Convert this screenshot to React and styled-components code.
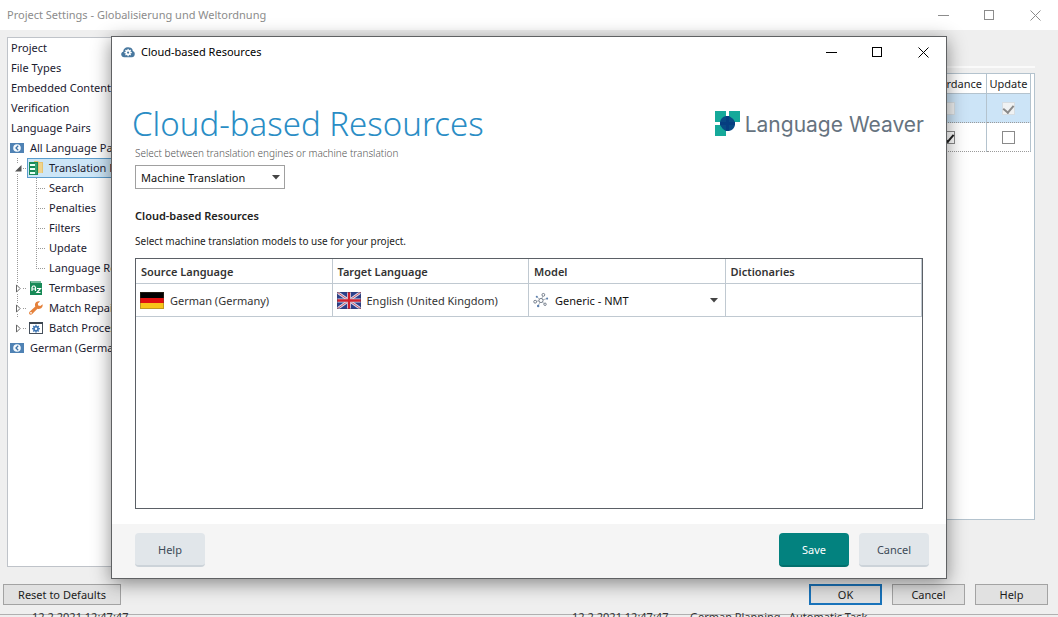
import React from 'react';
import styled, { createGlobalStyle, css } from 'styled-components';

const treeItems = [
  { label: 'Project', level: 0 },
  { label: 'File Types', level: 0 },
  { label: 'Embedded Content', level: 0 },
  { label: 'Verification', level: 0 },
  { label: 'Language Pairs', level: 0 },
  { label: 'All Language Pairs', level: 1, icon: 'pair' },
  { label: 'Translation Memory', level: 2, icon: 'memory', open: true, selected: true },
  { label: 'Search', level: 3 },
  { label: 'Penalties', level: 3 },
  { label: 'Filters', level: 3 },
  { label: 'Update', level: 3 },
  { label: 'Language Resources', level: 3, last: true },
  { label: 'Termbases', level: 2, icon: 'termbase' },
  { label: 'Match Repair', level: 2, icon: 'wrench' },
  { label: 'Batch Processing', level: 2, icon: 'batch', last: true },
  { label: 'German (Germany)', level: 1, icon: 'pair' },
];

const gearTeeth = [0, 45, 90, 135, 180, 225, 270, 315];

const Gear = ({ cx, cy, r, fill, hole }) => (
  <g fill={fill}>
    <circle cx={cx} cy={cy} r={r} />
    {gearTeeth.map((deg) => (
      <rect
        key={deg}
        x={cx - r * 0.25}
        y={cy - r * 1.4}
        width={r * 0.5}
        height={r}
        transform={`rotate(${deg} ${cx} ${cy})`}
      />
    ))}
    <circle cx={cx} cy={cy} r={r * 0.42} fill={hole} />
  </g>
);

const PairIcon = () => (
  <svg width="14" height="10" viewBox="0 0 14 10">
    <rect width="14" height="10" fill="#4f82b4" />
    <circle cx="7" cy="5" r="3.8" fill="#f4f9fd" />
    <path d="M8.2 2.8 6 5l2.200 2.200" fill="none" stroke="#3f74a8" strokeWidth="1.300" />
  </svg>
);

const MemoryIcon = () => (
  <svg width="16" height="16" viewBox="0 0 16 16">
    <path d="M6 1h4l1 1h4v11H6z" fill="#e6c472" />
    <path d="M11 3h3v10h-3z" fill="#efd38c" />
    <rect x="1" y="2" width="9" height="13" fill="#178a57" />
    <g fill="#e9fff4">
      <rect x="2" y="4" width="5" height="2" />
      <rect x="2" y="8" width="5" height="2" />
      <rect x="2" y="12" width="5" height="2" />
    </g>
    <path d="M8 3v11" stroke="#56b489" />
  </svg>
);

const TermbaseIcon = () => (
  <svg width="16" height="16" viewBox="0 0 16 16">
    <path d="M2 2q0-1 1-1h10v2H2z" fill="#178a57" />
    <path d="M3 2h10" stroke="#d9f0e5" />
    <rect x="2" y="3" width="12" height="12" fill="#178a57" />
    <path
      d="M4 11V7.5L5 6h1.500l1 1.500V11M4 9h3.500M9 8.500h3.500L9 12.500h3.500"
      fill="none"
      stroke="#fff"
      strokeWidth="1.200"
    />
  </svg>
);

const WrenchIcon = () => (
  <svg width="16" height="16" viewBox="0 0 16 16">
    <path
      d="M14.600 4.300 12.300 6 10.200 5.600 9.800 3.500 12 1.400C9.800.7 7.300 2 7 4.300c-.1.900 0 1.600.3 2.200L1.600 11.800c-1.600 1.700.6 4 2.400 2.500l5.400-5.600c2.900 1.100 5.800-1.200 5.200-4.400z"
      fill="#e5813b"
    />
    <circle cx="3" cy="12.800" r="0.900" fill="#fff" />
  </svg>
);

const BatchIcon = () => (
  <svg width="16" height="14" viewBox="0 0 16 14">
    <rect x="1.500" y="1.500" width="13" height="11" fill="#fff" stroke="#46505c" />
    <rect x="1" y="1" width="14" height="2" fill="#3c4651" />
    <Gear cx={8} cy={7.700} r={2.800} fill="#3f77b4" hole="#fff" />
  </svg>
);

const itemIcons = {
  pair: PairIcon,
  memory: MemoryIcon,
  termbase: TermbaseIcon,
  wrench: WrenchIcon,
  batch: BatchIcon,
};

const CloudIcon = () => (
  <svg width="14" height="12" viewBox="0 0 15 12">
    <path
      d="M3.500 11.500C-.6 11.500-.8 6 2.400 5.600 2.300 2 6 0 8.800 1.200 10.700.900 12.600 2.500 12.600 5c3.200.7 2.800 6.500-1 6.500z"
      fill="#48789f"
    />
    <Gear cx={7.600} cy={6.600} r={2.800} fill="#fff" hole="#48789f" />
  </svg>
);

const ModelIcon = () => (
  <svg width="16" height="17" viewBox="0 0 17 17">
    <path
      d="m8.500 8.500 2.500-6M8.500 8.500l-6 1M8.500 8.500l-3 5.500M8.500 8.500l6-2M8.500 8.500l4 4M8.500 8.500 4 4.500"
      stroke="#a9b1bb"
    />
    <g fill="#fff" stroke="#6f7986">
      <circle cx="8.500" cy="8.500" r="2.200" />
      <circle cx="11" cy="2.500" r="1.500" />
      <circle cx="2.300" cy="9.800" r="1.500" />
      <circle cx="12.800" cy="12.500" r="1.300" />
    </g>
    <g fill="#5b7fae">
      <circle cx="4" cy="4.500" r="1.100" />
      <circle cx="5.500" cy="14.300" r="1.300" />
      <circle cx="15" cy="6.500" r="1.100" />
    </g>
  </svg>
);

const GermanFlag = () => (
  <svg width="24" height="17" viewBox="0 0 24 17">
    <rect width="24" height="6" fill="#000" />
    <rect y="6" width="24" height="5" fill="#e01010" />
    <rect y="11" width="24" height="6" fill="#f8c418" />
    <rect x="0.500" y="0.500" width="23" height="16" fill="none" stroke="#5a4a2a" strokeOpacity="0.350" />
  </svg>
);

const BritishFlag = () => (
  <svg width="24" height="17" viewBox="0 0 24 17">
    <rect width="24" height="17" fill="#2b3f8c" />
    <path d="M0 0l24 17M24 0 0 17" stroke="#d5daec" strokeWidth="2.800" />
    <path d="M0 0l24 17M24 0 0 17" stroke="#cf5360" strokeWidth="1" />
    <path d="M12 0v17M0 8.500h24" stroke="#d3d7ea" strokeWidth="4" />
    <path d="M12 0v17M0 8.500h24" stroke="#d0202e" strokeWidth="2.400" />
    <rect x="0.500" y="0.500" width="23" height="16" fill="none" stroke="#333a66" strokeOpacity="0.400" />
  </svg>
);

const WeaverMark = () => (
  <svg width="26" height="26" viewBox="0 0 26 26">
    <path d="M0 0h11v11H0zM14 0h11v11H14zM0 14h11v11H0z" fill="#15a99a" />
    <path d="M11 5v6H5q1-5 6-6zM14 14h6q-1 5-6 6z" fill="#084a84" />
    <path d="M14 5q4 2 6 6h-6zM5 14h6v6q-4-2-6-6z" fill="#084a84" />
    <path d="M11 5h3v6h6v3h-6v6h-3v-6H5v-3h6z" fill="#063e80" />
  </svg>
);

const CaretDown = () => (
  <svg width="8" height="5" viewBox="0 0 8 5">
    <path d="M0 0h8L4 4.500z" fill="currentColor" />
  </svg>
);

const Expander = ({ open }) => (
  <svg width="8" height="9" viewBox="0 0 8 9">
    {open ? (
      <path d="M6.500 1v6.500H0z" fill="#555" />
    ) : (
      <path d="M1.500 .9v7.200l3.600-3.600z" fill="#fff" stroke="#666" />
    )}
  </svg>
);

const WindowControls = () => (
  <StControls>
    <StControlButton aria-label="Minimize">
      <svg width="11" height="11" viewBox="0 0 11 11">
        <path d="M0 5.500h11" stroke="currentColor" />
      </svg>
    </StControlButton>
    <StControlButton aria-label="Maximize">
      <svg width="11" height="11" viewBox="0 0 11 11">
        <rect x="0.500" y="0.500" width="9" height="9" fill="none" stroke="currentColor" />
      </svg>
    </StControlButton>
    <StControlButton aria-label="Close">
      <svg width="11" height="11" viewBox="0 0 11 11">
        <path d="m.5.5 10 10M10.500.5l-10 10" stroke="currentColor" />
      </svg>
    </StControlButton>
  </StControls>
);

const TreeItem = ({ item }) => {
  const Icon = itemIcons[item.icon];
  return (
    <StTreeRow>
      {item.level >= 2 && (
        <StGutter $line={item.level === 3 || !item.last} $branch={item.level === 2}>
          {item.level === 2 && <Expander open={item.open} />}
        </StGutter>
      )}
      {item.level === 3 && <StGutter $line={!item.last} $half={item.last} $branch />}
      <StTreeLabel $level={item.level} $selected={item.selected}>
        {Icon && <Icon />}
        <span>{item.label}</span>
      </StTreeLabel>
    </StTreeRow>
  );
};

const SettingsWindow = () => (
  <StWindow>
    <StTitleBar $inactive>
      <StWindowTitle>Project Settings - Globalisierung und Weltordnung</StWindowTitle>
      <WindowControls />
    </StTitleBar>
    <StBody>
      <StTree>
        {treeItems.map((item) => (
          <TreeItem key={item.label} item={item} />
        ))}
      </StTree>
      <StPanel>
        <StMemoryTable>
          <thead>
            <tr>
              <th aria-hidden="true" />
              <th>Concordance</th>
              <th>Update</th>
            </tr>
          </thead>
          <tbody>
            <StMemoryRow $selected>
              <td />
              <td>
                <StCheckbox type="checkbox" aria-label="Concordance" disabled />
              </td>
              <td>
                <StCheckbox type="checkbox" aria-label="Update" defaultChecked disabled />
              </td>
            </StMemoryRow>
            <StMemoryRow>
              <td />
              <td>
                <StCheckbox type="checkbox" aria-label="Concordance" defaultChecked />
              </td>
              <td>
                <StCheckbox type="checkbox" aria-label="Update" />
              </td>
            </StMemoryRow>
          </tbody>
        </StMemoryTable>
      </StPanel>
    </StBody>
    <StWindowFooter>
      <StClassicButton $wide>Reset to Defaults</StClassicButton>
      <StButtonGroup>
        <StClassicButton $primary>OK</StClassicButton>
        <StClassicButton>Cancel</StClassicButton>
        <StClassicButton>Help</StClassicButton>
      </StButtonGroup>
    </StWindowFooter>
    <StTaskStrip>
      <span>12.2.2021 12:47:47</span>
      <span>12.2.2021 12:47:47</span>
      <span>German Planning</span>
      <span>Automatic Task</span>
    </StTaskStrip>
  </StWindow>
);

const ResourcesDialog = () => (
  <StDialog role="dialog" aria-labelledby="dialog-title">
    <StTitleBar>
      <CloudIcon />
      <StWindowTitle id="dialog-title">Cloud-based Resources</StWindowTitle>
      <WindowControls />
    </StTitleBar>
    <StDialogHeader>
      <StHeading>Cloud-based Resources</StHeading>
      <StBrand>
        <WeaverMark />
        Language Weaver
      </StBrand>
    </StDialogHeader>
    <StDialogContent>
      <StHint htmlFor="engine">Select between translation engines or machine translation</StHint>
      <StSelectBox $bordered>
        <select id="engine">
          <option>Machine Translation</option>
        </select>
        <CaretDown />
      </StSelectBox>
      <StSubheading>Cloud-based Resources</StSubheading>
      <StText>Select machine translation models to use for your project.</StText>
      <StTableFrame>
        <StModelTable>
          <thead>
            <tr>
              <th>Source Language</th>
              <th>Target Language</th>
              <th>Model</th>
              <th>Dictionaries</th>
            </tr>
          </thead>
          <tbody>
            <tr>
              <td>
                <StCell>
                  <GermanFlag />
                  German (Germany)
                </StCell>
              </td>
              <td>
                <StCell>
                  <BritishFlag />
                  English (United Kingdom)
                </StCell>
              </td>
              <td>
                <StCell>
                  <ModelIcon />
                  <StSelectBox>
                    <select aria-label="Model">
                      <option>Generic - NMT</option>
                    </select>
                    <CaretDown />
                  </StSelectBox>
                </StCell>
              </td>
              <td />
            </tr>
          </tbody>
        </StModelTable>
      </StTableFrame>
    </StDialogContent>
    <StDialogFooter>
      <StFlatButton>Help</StFlatButton>
      <StButtonGroup>
        <StFlatButton $primary>Save</StFlatButton>
        <StFlatButton>Cancel</StFlatButton>
      </StButtonGroup>
    </StDialogFooter>
  </StDialog>
);

const App = () => (
  <>
    <GlobalStyle />
    <SettingsWindow />
    <ResourcesDialog />
  </>
);

export default App;

const GlobalStyle = createGlobalStyle`
  * {
    box-sizing: border-box;
  }

  body {
    margin: 0;
    overflow: hidden;
    color: #1c1c1c;
    font-family: 'Noto Sans', 'Open Sans', sans-serif;
    font-size: 11px;
  }

  button,
  select {
    color: inherit;
    font: inherit;
  }

  svg {
    flex: none;
  }
`;

const StWindow = styled.div`
  display: flex;
  flex-direction: column;
  height: 100vh;
  background-color: #efefef;
`;

const StTitleBar = styled.div`
  display: flex;
  flex: none;
  align-items: center;
  gap: 6px;
  height: 30px;
  padding-left: ${({ $inactive }) => ($inactive ? '7px' : '9px')};
  background-color: #ffffff;
  color: ${({ $inactive }) => ($inactive ? '#8c8c8c' : '#000000')};
`;

const StWindowTitle = styled.div`
  flex: 1;
  padding-bottom: 2px;
`;

const StControls = styled.div`
  display: flex;
  height: 100%;
`;

const StControlButton = styled.button`
  display: flex;
  align-items: center;
  justify-content: center;
  width: 46px;
  padding: 0;
  border: none;
  background: none;
`;

const StBody = styled.div`
  display: flex;
  flex: 1;
  gap: 8px;
  min-height: 0;
  padding: 7px 23px 0 7px;
`;

const StTree = styled.div`
  flex: 0 0 240px;
  border: 1px solid #bfc3c9;
  background-color: #ffffff;
  color: #1b2030;
`;

const StTreeRow = styled.div`
  display: flex;
  height: 20px;
`;

const StGutter = styled.span`
  display: flex;
  align-items: center;
  width: 19px;
  padding-left: 7px;
  background-image: ${({ $branch }) =>
      $branch ? 'repeating-linear-gradient(90deg, #999 0 1px, transparent 1px 2px)' : 'none'},
    ${({ $line, $half }) =>
      $line || $half ? 'repeating-linear-gradient(#999 0 1px, transparent 1px 2px)' : 'none'};
  background-position: 9px 10px, 9px 0;
  background-repeat: no-repeat;
  background-size: 9px 1px, 1px ${({ $half }) => ($half ? '11px' : '100%')};

  svg {
    background-color: #ffffff;
  }
`;

const StTreeLabel = styled.span`
  display: flex;
  flex: 1;
  align-items: center;
  gap: ${({ $level }) => ($level === 1 ? '6px' : '5px')};
  padding-left: ${({ $level }) => [3, 2, 0, 3][$level]}px;
  overflow: hidden;
  white-space: nowrap;
  border: 1px solid ${({ $selected }) => ($selected ? '#5a9ccc' : 'transparent')};
  border-left-width: ${({ $level }) => ($level === 2 ? '1px' : '0')};
  background-color: ${({ $selected }) => ($selected ? '#cde6f7' : 'transparent')};

  span {
    padding-bottom: 2px;
  }
`;

const StPanel = styled.div`
  flex: 1;
  margin: 29px 0 47px;
  padding-top: 5px;
  border-top: 2px solid #fafafa;
`;

const StMemoryTable = styled.table`
  display: block;
  height: 100%;
  padding-right: 3px;
  border: 1px solid #b4c3ce;
  background-color: #ffffff;
  border-collapse: separate;
  border-spacing: 0;

  thead,
  tbody {
    display: block;
  }

  tr {
    display: grid;
    grid-template-columns: 1fr 77px 44px;
  }

  th {
    height: 20px;
    padding: 0;
    border-right: 1px solid #b4c3ce;
    border-bottom: 1px solid #b4c3ce;
    line-height: 20px;
    font-weight: 400;
    text-align: center;
  }
`;

const StMemoryRow = styled.tr`
  td {
    display: flex;
    align-items: center;
    justify-content: center;
    height: 29px;
    border-right: 1px solid #b4c3ce;
    border-bottom: 1px dotted #9a9a9a;
    background-color: ${({ $selected }) => ($selected ? '#cce4f7' : '#ffffff')};
  }
`;

const StCheckbox = styled.input`
  appearance: none;
  display: flex;
  width: 13px;
  height: 13px;
  margin: 0;
  border: 1px solid #8a8a8a;
  background-color: #ffffff;
  color: #222222;

  &:disabled {
    border-color: #d6dde2;
    background-color: #f0f2f3;
    color: #8a8a8a;
  }

  &:checked::before {
    content: '';
    width: 5px;
    height: 8px;
    margin: 0 auto;
    border: solid currentColor;
    border-width: 0 2px 2px 0;
    transform: rotate(40deg);
  }
`;

const StWindowFooter = styled.div`
  display: flex;
  flex: none;
  justify-content: space-between;
  padding: 17px 10px 8px 3px;
`;

const StButtonGroup = styled.div`
  display: flex;
  gap: 10px;
`;

const StClassicButton = styled.button`
  width: ${({ $wide }) => ($wide ? '118px' : '73px')};
  height: 21px;
  padding: 0;
  border: ${({ $primary }) => ($primary ? '2px solid #1a74bb' : '1px solid #a3a3a3')};
  background-color: #e1e1e1;
`;

const StTaskStrip = styled.div`
  display: grid;
  flex: none;
  grid-template-columns: 540px 118px 99px auto;
  height: 4px;
  padding-left: 32px;
  overflow: hidden;
  background: linear-gradient(#efefef 1px, #b0b0b0 1px 2px, #efefef 2px);
  color: #333333;
  line-height: 8px;
`;

const StDialog = styled.div`
  position: absolute;
  inset: 36px 111px 38px;
  display: flex;
  flex-direction: column;
  border: 1px solid #5f6163;
  background-color: #ffffff;
  box-shadow: 0 4px 18px rgba(0, 0, 0, 0.45);
`;

const StDialogHeader = styled.div`
  display: flex;
  align-items: center;
  justify-content: space-between;
  padding: 35px 22px 0 20px;
`;

const StHeading = styled.h1`
  margin: 0;
  color: #2a8dc5;
  font-size: 33px;
  font-weight: 300;
  line-height: 44px;
`;

const StBrand = styled.div`
  display: flex;
  align-items: center;
  gap: 4px;
  color: #66737f;
  font-family: Inter, 'Open Sans', sans-serif;
  font-size: 21px;
  font-weight: 400;
`;

const StDialogContent = styled.div`
  display: flex;
  flex: 1;
  flex-direction: column;
  align-items: flex-start;
  padding: 0 23px 15px;
`;

const StHint = styled.label`
  margin-bottom: 4px;
  color: #555555;
  font-size: 10px;
  font-weight: 300;
  line-height: 15px;
`;

const StSelectBox = styled.div`
  display: grid;
  align-items: center;
  flex: 1;
  color: #444444;

  select {
    grid-area: 1 / 1;
    width: 100%;
    height: 22px;
    padding: 0 5px;
    border: none;
    background: none;
    color: #111111;
    appearance: none;
  }

  svg {
    grid-area: 1 / 1;
    justify-self: end;
    margin-right: ${({ $bordered }) => ($bordered ? '4px' : '3px')};
    pointer-events: none;
  }

  ${({ $bordered }) =>
    $bordered &&
    css`
      flex: none;
      width: 150px;
      border: 1px solid #a0a0a0;
    `}
`;

const StSubheading = styled.h2`
  margin: 17px 0 5px;
  color: #222222;
  font-size: 11px;
  font-weight: 600;
  line-height: 20px;
`;

const StText = styled.p`
  margin: 0 0 7px;
  font-size: 10px;
  line-height: 20px;
`;

const StTableFrame = styled.div`
  flex: 1;
  width: 100%;
  border: 1px solid #5b6066;
`;

const StModelTable = styled.table`
  width: 100%;
  border-spacing: 0;
  table-layout: fixed;
  color: #333333;

  th,
  td {
    padding: 0 4px;
    border-right: 1px solid #c0c9d1;
    border-bottom: 1px solid #c0c9d1;
    text-align: left;
  }

  th {
    height: 25px;
    padding: 0 5px;
    font-weight: 600;
  }

  td {
    height: 33px;
  }
`;

const StCell = styled.div`
  display: flex;
  align-items: center;
  gap: 6px;

  ${StSelectBox} select {
    padding: 0;
  }
`;

const StDialogFooter = styled.div`
  display: flex;
  flex: none;
  align-items: flex-start;
  justify-content: space-between;
  height: 54px;
  padding: 9px 17px 0 23px;
  background-color: #f5f5f5;
`;

const StFlatButton = styled.button`
  width: 70px;
  height: 34px;
  padding: 0;
  border: none;
  border-bottom: 2px solid ${({ $primary }) => ($primary ? '#02706d' : '#ccd3d9')};
  border-radius: 4px;
  background-color: ${({ $primary }) => ($primary ? '#03827f' : '#e1e6ea')};
  color: ${({ $primary }) => ($primary ? '#ffffff' : '#3d4a57')};
`;
